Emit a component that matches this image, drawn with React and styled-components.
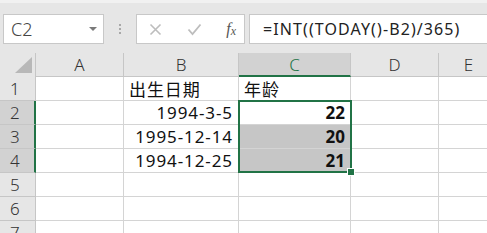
import styled, { createGlobalStyle } from "styled-components";

const GlobalStyle = createGlobalStyle`
  html, body {
    margin: 0;
    padding: 0;
    background: #ffffff;
    overflow: hidden;
  }
  body {
    font-family: "Noto Sans CJK SC", "Noto Sans", sans-serif;
  }
`;

const COLS = [
  { key: "A", width: 88 },
  { key: "B", width: 115 },
  { key: "C", width: 112 },
  { key: "D", width: 88 },
  { key: "E", width: 60 },
];

const ROWS = [
  { n: 1, B: { text: "出生日期", align: "left" }, C: { text: "年龄", align: "left" } },
  { n: 2, B: { text: "1994-3-5" }, C: { text: "22", bold: true } },
  { n: 3, B: { text: "1995-12-14" }, C: { text: "20", bold: true, shaded: true } },
  { n: 4, B: { text: "1994-12-25" }, C: { text: "21", bold: true, shaded: true } },
  { n: 5 },
  { n: 6 },
  { n: 7 },
];

const SELECTED_ROWS = [2, 3, 4];

const App = () => {
  return (
    <>
      <GlobalStyle />
      <Page>
        <Toolbar>
          <NameBox>
            <span>C2</span>
            <Caret />
          </NameBox>
          <Grip>
            <i />
            <i />
            <i />
          </Grip>
          <FxButtons>
            <svg width="13" height="13" viewBox="0 0 13 13">
              <path d="M1.5 1.5 L11.5 11.5 M11.5 1.5 L1.5 11.5" stroke="#bdbdbd" strokeWidth="1.6" />
            </svg>
            <svg width="15" height="13" viewBox="0 0 15 13">
              <path d="M1.5 6.5 L5.5 11 L13.5 1.5" stroke="#bdbdbd" strokeWidth="1.8" fill="none" />
            </svg>
            <FxLabel>
              f<sub>x</sub>
            </FxLabel>
          </FxButtons>
          <FormulaInput>=INT((TODAY()-B2)/365)</FormulaInput>
        </Toolbar>

        <Sheet>
          <HeadRow>
            <Corner>
              <svg width="17" height="16" viewBox="0 0 17 16">
                <path d="M17 0 L17 16 L0 16 Z" fill="#b8b8b8" />
              </svg>
            </Corner>
            {COLS.map((c) => (
              <ColHead key={c.key} $w={c.width} $active={c.key === "C"}>
                {c.key}
              </ColHead>
            ))}
          </HeadRow>

          {ROWS.map((r) => (
            <Row key={r.n}>
              <RowHead $active={SELECTED_ROWS.includes(r.n)}>{r.n}</RowHead>
              {COLS.map((c) => {
                const cell = r[c.key];
                return (
                  <Cell
                    key={c.key}
                    $w={c.width}
                    $align={cell?.align}
                    $bold={cell?.bold}
                    $shaded={cell?.shaded}
                  >
                    {cell?.text}
                  </Cell>
                );
              })}
            </Row>
          ))}

          <Selection>
            <Handle />
          </Selection>
        </Sheet>
      </Page>
    </>
  );
};

export default App;

const Page = styled.div`
  width: 487px;
  height: 233px;
  overflow: hidden;
  background: #ffffff;
`;

const Toolbar = styled.div`
  display: flex;
  align-items: center;
  height: 50px;
  box-sizing: border-box;
  padding: 11px 0 6px 3px;
  background: #e6e6e6;
  border-top: 3px solid #f1f1f1;
`;

const Box = styled.div`
  height: 30px;
  box-sizing: border-box;
  background: #ffffff;
  border: 1px solid #c8c8c8;
  display: flex;
  align-items: center;
`;

const NameBox = styled(Box)`
  width: 101px;
  padding: 0 6px 0 7px;
  justify-content: space-between;
  font-family: "Noto Sans", sans-serif;
  font-size: 18px;
  font-weight: 300;
  color: #444444;
`;

const Caret = styled.span`
  width: 0;
  height: 0;
  border-left: 4px solid transparent;
  border-right: 4px solid transparent;
  border-top: 4px solid #7a7a7a;
`;

const Grip = styled.div`
  width: 32px;
  display: flex;
  flex-direction: column;
  align-items: center;
  gap: 2px;

  i {
    width: 2px;
    height: 2px;
    background: #a8a8a8;
  }
`;

const FxButtons = styled(Box)`
  width: 109px;
  padding: 0 8px 0 12px;
  justify-content: space-between;
`;

const FxLabel = styled.span`
  font-family: "Liberation Serif", "Times New Roman", serif;
  font-style: italic;
  font-size: 16px;
  color: #555555;
  line-height: 1;

  sub {
    font-size: 12px;
    vertical-align: -1px;
  }
`;

const FormulaInput = styled(Box)`
  flex: 1;
  margin-left: 4px;
  border-right: none;
  padding-left: 13px;
  font-family: "Noto Sans", sans-serif;
  font-size: 16px;
  color: #222222;
  letter-spacing: 1.1px;
  white-space: nowrap;
`;

const Sheet = styled.div`
  position: relative;
  font-size: 16px;
  color: #111111;
`;

const HeadRow = styled.div`
  display: flex;
  height: 24px;
  background: #e6e6e6;
  border-top: 3px solid #e6e6e6;
`;

const Corner = styled.div`
  width: 36px;
  flex: none;
  box-sizing: border-box;
  border-right: 1px solid #c6c6c6;
  display: flex;
  justify-content: flex-end;
  align-items: flex-end;
  padding: 0 3px 4px 0;
`;

const ColHead = styled.div`
  width: ${(p) => p.$w}px;
  flex: none;
  box-sizing: border-box;
  display: flex;
  align-items: center;
  justify-content: center;
  font-family: "Noto Sans", sans-serif;
  font-size: 17px;
  font-weight: 300;
  color: ${(p) => (p.$active ? "#217346" : "#333333")};
  background: ${(p) => (p.$active ? "#d2d2d2" : "#e6e6e6")};
  border-right: 1px solid #c6c6c6;
  border-bottom: ${(p) => (p.$active ? "2px solid #217346" : "1px solid #c6c6c6")};
`;

const Row = styled.div`
  display: flex;
  height: 24px;
`;

const RowHead = styled.div`
  width: 36px;
  flex: none;
  box-sizing: border-box;
  display: flex;
  align-items: center;
  padding-left: 10px;
  font-family: "Noto Sans", sans-serif;
  font-size: 17px;
  font-weight: 300;
  color: #333333;
  background: ${(p) => (p.$active ? "#d2d2d2" : "#e6e6e6")};
  border-bottom: 1px solid #c6c6c6;
  border-right: ${(p) => (p.$active ? "2px solid #217346" : "1px solid #c6c6c6")};
`;

const Cell = styled.div`
  width: ${(p) => p.$w}px;
  flex: none;
  box-sizing: border-box;
  display: flex;
  align-items: center;
  justify-content: ${(p) => (p.$align === "left" ? "flex-start" : "flex-end")};
  padding: 0 5px;
  border-right: 1px solid #d4d4d4;
  border-bottom: 1px solid #d4d4d4;
  background: ${(p) => (p.$shaded ? "#c6c6c6" : "#ffffff")};
  font-family: "Noto Sans", "Noto Sans CJK SC", sans-serif;
  font-size: 17px;
  font-weight: ${(p) => (p.$bold ? 700 : 400)};
  letter-spacing: ${(p) => (p.$bold ? "0" : "0.9px")};
  white-space: nowrap;
`;

const Selection = styled.div`
  position: absolute;
  left: 238px;
  top: 50px;
  width: 114px;
  height: 73px;
  box-sizing: border-box;
  border: 2px solid #217346;
  pointer-events: none;
`;

const Handle = styled.div`
  position: absolute;
  right: -5px;
  bottom: -5px;
  width: 6px;
  height: 6px;
  background: #217346;
  border: 1px solid #ffffff;
`;
